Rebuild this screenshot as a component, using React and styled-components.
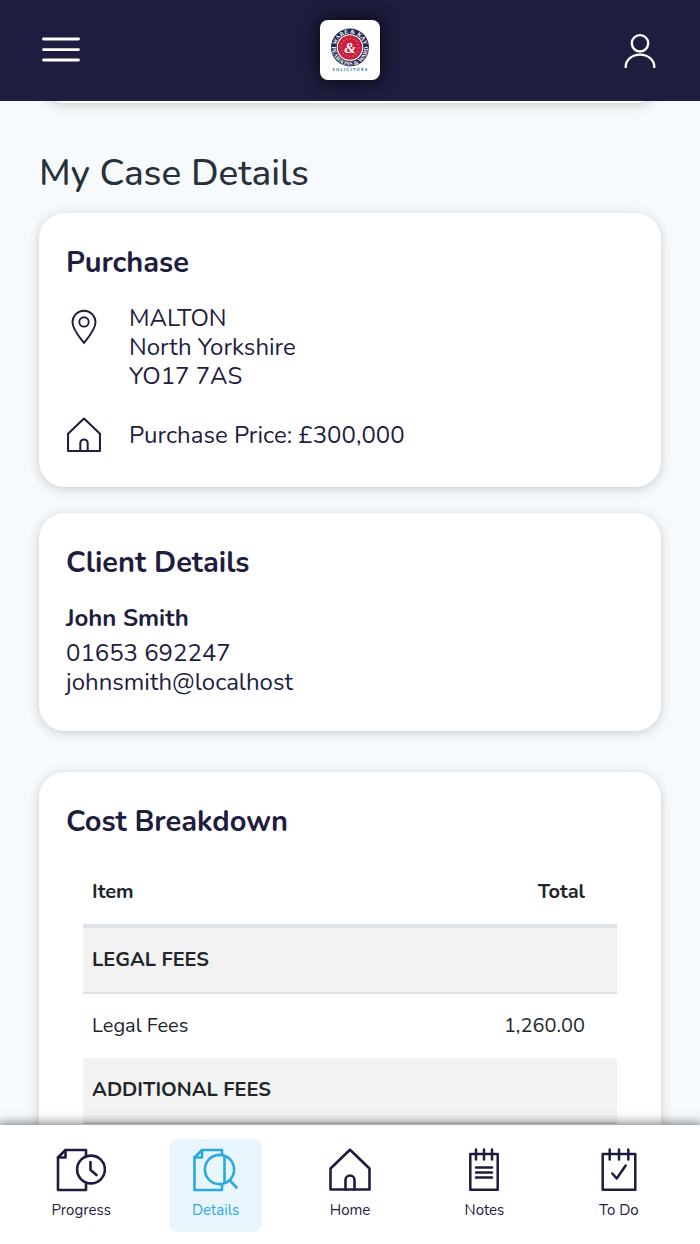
import React from 'react';
import styled, { createGlobalStyle } from 'styled-components';

const color = {
  navy: '#1e1d3f',
  blue: '#29abe2',
  paleBlue: '#e8f5fc',
  page: '#f6fafd',
  text: '#212529',
  heading: '#28303a',
  border: '#dee2e6',
  stripe: '#f2f2f2',
};

const GlobalStyle = createGlobalStyle`
  * {
    box-sizing: border-box;
  }

  body {
    margin: 0;
    background: ${color.page};
    color: ${color.navy};
    font-family: Nunito, Lato, sans-serif;
    font-size: 24px;
    line-height: 29px;
  }
`;

const Page = styled.div`
  height: 100vh;
  display: flex;
  flex-direction: column;
`;

const Header = styled.header`
  flex: none;
  display: grid;
  grid-template-columns: 1fr auto 1fr;
  align-items: center;
  padding: 20px 43px 21px 42px;
  background: ${color.navy};
`;

const IconButton = styled.button`
  display: flex;
  justify-self: ${props => (props.$end ? 'end' : 'start')};
  padding: 0;
  border: 0;
  background: none;
  color: white;
  cursor: pointer;
`;

const LogoLink = styled.a`
  display: flex;
  border-radius: 8px;
  background: white;
  box-shadow: 0 0 14px 4px rgba(0, 0, 0, 0.55);
`;

const Icon = styled.svg`
  display: block;
  fill: none;
  stroke: currentColor;
  stroke-width: ${props => props.$stroke || 2.6};
  stroke-linecap: round;
  stroke-linejoin: round;
`;

const Main = styled.main`
  flex: 1;
  min-height: 0;
  padding: 0 39px;
  overflow-y: auto;
  scrollbar-width: none;
`;

const Card = styled.section`
  margin-bottom: ${props => (props.$spaced ? 41 : 26)}px;
  padding: 32px 27px 34px;
  border-radius: 26px;
  background: white;
  box-shadow: 0 2px 12px rgba(0, 0, 0, 0.18);
`;

// end of the card that is scrolled under the header
const ScrolledCard = styled(Card)`
  height: 66px;
  margin-top: -64px;
  margin-bottom: 46px;
`;

const PageTitle = styled.h1`
  margin: 0 0 16px;
  color: ${color.heading};
  font-size: 37px;
  font-weight: 500;
  line-height: 48px;
`;

const CardTitle = styled.h2`
  margin: 0 0 23px;
  font-size: 29px;
  font-weight: 700;
  line-height: 36px;
`;

const InfoRow = styled.div`
  display: grid;
  grid-template-columns: 36px 1fr;
  column-gap: 27px;
  align-items: ${props => (props.$top ? 'start' : 'center')};
  justify-items: start;

  & + & {
    margin-top: 26px;
  }
`;

const InfoIcon = styled.div`
  justify-self: center;
  padding: ${props => (props.$low ? '5px 0 0' : '0')};
`;

const Address = styled.address`
  font-style: normal;
`;

const ClientName = styled.h3`
  margin: 0 0 6px;
  font-size: 24px;
  font-weight: 700;
  line-height: 29px;
`;

const Line = styled.div``;

const TableWrap = styled.div`
  margin-top: -3px;
  padding: 0 17px;
`;

const Table = styled.table`
  width: 100%;
  border-collapse: separate;
  border-spacing: 0;
  color: ${color.text};
  font-size: 20px;
  line-height: 30px;
`;

const Cell = styled.td`
  padding: 17px 32px 17px 9px;
  text-align: ${props => (props.$right ? 'right' : 'left')};
`;

const HeadCell = styled(Cell)`
  border-bottom: 4px solid ${color.border};
  font-weight: 700;
`;

const GroupCell = styled(Cell)`
  border-bottom: 2px solid ${color.border};
  background: ${color.stripe};
  font-weight: 700;
`;

const BottomNav = styled.nav`
  position: relative;
  z-index: 1;
  flex: none;
  display: flex;
  padding: 14px 14px 12px;
  background: white;
  box-shadow: 0 0 10px 2px rgba(0, 0, 0, 0.5);
`;

const NavSlot = styled.div`
  flex: 1;
  display: flex;
  justify-content: center;
`;

const NavLink = styled.a`
  width: 93px;
  display: flex;
  flex-direction: column;
  align-items: center;
  gap: 8px;
  padding: 9px 0 12px;
  border-radius: 9px;
  background: ${props => (props.$active ? color.paleBlue : 'none')};
  color: ${props => (props.$active ? color.blue : color.navy)};
  font-size: 15px;
  line-height: 20px;
  text-decoration: none;
`;

const MenuIcon = () => (
  <Icon width="38" height="26" viewBox="0 0 38 26" $stroke={2.8} aria-hidden="true">
    <path d="M1.5 2H36.5M1.5 12.6H36.5M1.5 23H36.5" />
  </Icon>
);

const UserIcon = () => (
  <Icon width="34" height="36" viewBox="0 0 34 36" $stroke={2.4} aria-hidden="true">
    <circle cx="17" cy="11.3" r="8.2" />
    <path d="M2.7 35C2.7 28 9 22.6 17 22.6S31.3 28 31.3 35" />
  </Icon>
);

const PinIcon = () => (
  <Icon width="26" height="36" viewBox="0 0 26 36" $stroke={1.9} aria-hidden="true">
    <path d="M13 34C10 30 1.5 20.5 1.5 13.2A11.5 11.5 0 0 1 24.5 13.2C24.5 20.5 16 30 13 34Z" />
    <circle cx="13" cy="12.9" r="4.7" />
  </Icon>
);

const HouseIcon = ({ size, stroke }) => (
  <Icon width={size} height={size} viewBox="0 0 44 44" $stroke={stroke} aria-hidden="true">
    <path d="M2.5 20.5L22 1.8L41.5 20.5V41.5H2.5Z" />
    <path d="M17.5 41.5V32A4.5 4.5 0 0 1 26.5 32V41.5" />
  </Icon>
);

const ProgressIcon = () => (
  <Icon width="50" height="44" viewBox="0 0 50 44" aria-hidden="true">
    <path d="M30 8V2H9.5L2 9.5V42H30V35.5" />
    <path d="M9.5 2V9.5H2" />
    <circle cx="35" cy="21.5" r="13.9" />
    <path d="M34.5 14V22L40.5 27" />
  </Icon>
);

const DetailsIcon = () => (
  <Icon width="48" height="44" viewBox="0 0 48 44" aria-hidden="true">
    <path d="M30 6.5V2H10L2.5 9.5V42H30V36.5" />
    <path d="M10 2V9.5H2.5" />
    <circle cx="27.5" cy="21.5" r="14.6" />
    <path d="M32.5 8.5V34.5M38 32.5L44.5 39.5" />
  </Icon>
);

const NotesIcon = () => (
  <Icon width="30" height="44" viewBox="0 0 30 44" $stroke={2.5} aria-hidden="true">
    <path d="M1.3 6H28.7V41.8H1.3Z" />
    <path d="M7 1.5V11.5M15 1.5V11.5M23 1.5V11.5" />
    <path d="M7 19.5H23M7 24.5H23M7 29.5H23" />
  </Icon>
);

const TodoIcon = () => (
  <Icon width="36" height="44" viewBox="0 0 36 44" $stroke={2.5} aria-hidden="true">
    <path d="M1.7 6H34.3V41.8H1.7Z" />
    <path d="M8.7 1.5V11.5M18 1.5V11.5M27.3 1.5V11.5" />
    <path d="M11.3 25.5L15.7 30.5L24.7 17.5" />
  </Icon>
);

const Logo = () => (
  <svg width="60" height="60" viewBox="0 0 60 60" role="img" aria-label="Ware & Kay, Pearsons & Ward Solicitors">
    <defs>
      <path id="logo-top" d="M16 27.5A14 14 0 0 1 44 27.5" />
      <path id="logo-bottom" d="M12.1 25A18.1 18.1 0 1 0 47.9 25" />
    </defs>
    <circle cx="30" cy="27.5" r="19" fill="#24284f" />
    <circle cx="30" cy="27.5" r="13.3" fill="white" />
    <circle cx="30" cy="27.5" r="12.2" fill="#c9213d" />
    <circle cx="30" cy="27.5" r="9" fill="none" stroke="#e57d8c" strokeWidth="1.2" strokeDasharray="1 2.5" />
    <g fill="white" fontFamily="Liberation Serif, serif" fontWeight="700" textAnchor="middle">
      <text fontSize="6">
        <textPath href="#logo-top" startOffset="50%">WARE &amp; KAY</textPath>
      </text>
      <text fontSize="6">
        <textPath href="#logo-bottom" startOffset="50%">PEARSONS &amp; WARD</textPath>
      </text>
      <text x="30" y="32.5" fontSize="15" fontStyle="italic">&amp;</text>
    </g>
    <text
      x="30.5"
      y="51"
      fill="#2873a8"
      fontFamily="Lato, sans-serif"
      fontSize="4"
      fontWeight="900"
      letterSpacing="1.3"
      textAnchor="middle"
    >
      SOLICITORS
    </text>
  </svg>
);

const navItems = [
  { label: 'Progress', icon: <ProgressIcon /> },
  { label: 'Details', icon: <DetailsIcon />, active: true },
  { label: 'Home', icon: <HouseIcon size={44} stroke={2.6} /> },
  { label: 'Notes', icon: <NotesIcon /> },
  { label: 'To Do', icon: <TodoIcon /> },
];

const App = () => {
  return (
    <Page>
      <GlobalStyle />
      <Header>
        <IconButton type="button" aria-label="Menu">
          <MenuIcon />
        </IconButton>
        <LogoLink href="#home">
          <Logo />
        </LogoLink>
        <IconButton type="button" aria-label="Account" $end>
          <UserIcon />
        </IconButton>
      </Header>

      <Main>
        <ScrolledCard as="div" />
        <PageTitle>My Case Details</PageTitle>

        <Card>
          <CardTitle>Purchase</CardTitle>
          <InfoRow $top>
            <InfoIcon $low>
              <PinIcon />
            </InfoIcon>
            <Address>
              MALTON
              <br />
              North Yorkshire
              <br />
              YO17 7AS
            </Address>
          </InfoRow>
          <InfoRow>
            <InfoIcon>
              <HouseIcon size={36} stroke={2.5} />
            </InfoIcon>
            <Line>Purchase Price: £300,000</Line>
          </InfoRow>
        </Card>

        <Card $spaced>
          <CardTitle>Client Details</CardTitle>
          <ClientName>John Smith</ClientName>
          <Line>01653 692247</Line>
          <Line>johnsmith@localhost</Line>
        </Card>

        <Card>
          <CardTitle>Cost Breakdown</CardTitle>
          <TableWrap>
            <Table>
              <thead>
                <tr>
                  <HeadCell as="th" scope="col">Item</HeadCell>
                  <HeadCell as="th" scope="col" $right>Total</HeadCell>
                </tr>
              </thead>
              <tbody>
                <tr>
                  <GroupCell colSpan="2">LEGAL FEES</GroupCell>
                </tr>
                <tr>
                  <Cell>Legal Fees</Cell>
                  <Cell $right>1,260.00</Cell>
                </tr>
                <tr>
                  <GroupCell colSpan="2">ADDITIONAL FEES</GroupCell>
                </tr>
              </tbody>
            </Table>
          </TableWrap>
        </Card>
      </Main>

      <BottomNav>
        {navItems.map(item => (
          <NavSlot key={item.label}>
            <NavLink
              href={`#${item.label.toLowerCase().replace(' ', '')}`}
              $active={item.active}
              aria-current={item.active ? 'page' : undefined}
            >
              {item.icon}
              {item.label}
            </NavLink>
          </NavSlot>
        ))}
      </BottomNav>
    </Page>
  );
};

export default App;
